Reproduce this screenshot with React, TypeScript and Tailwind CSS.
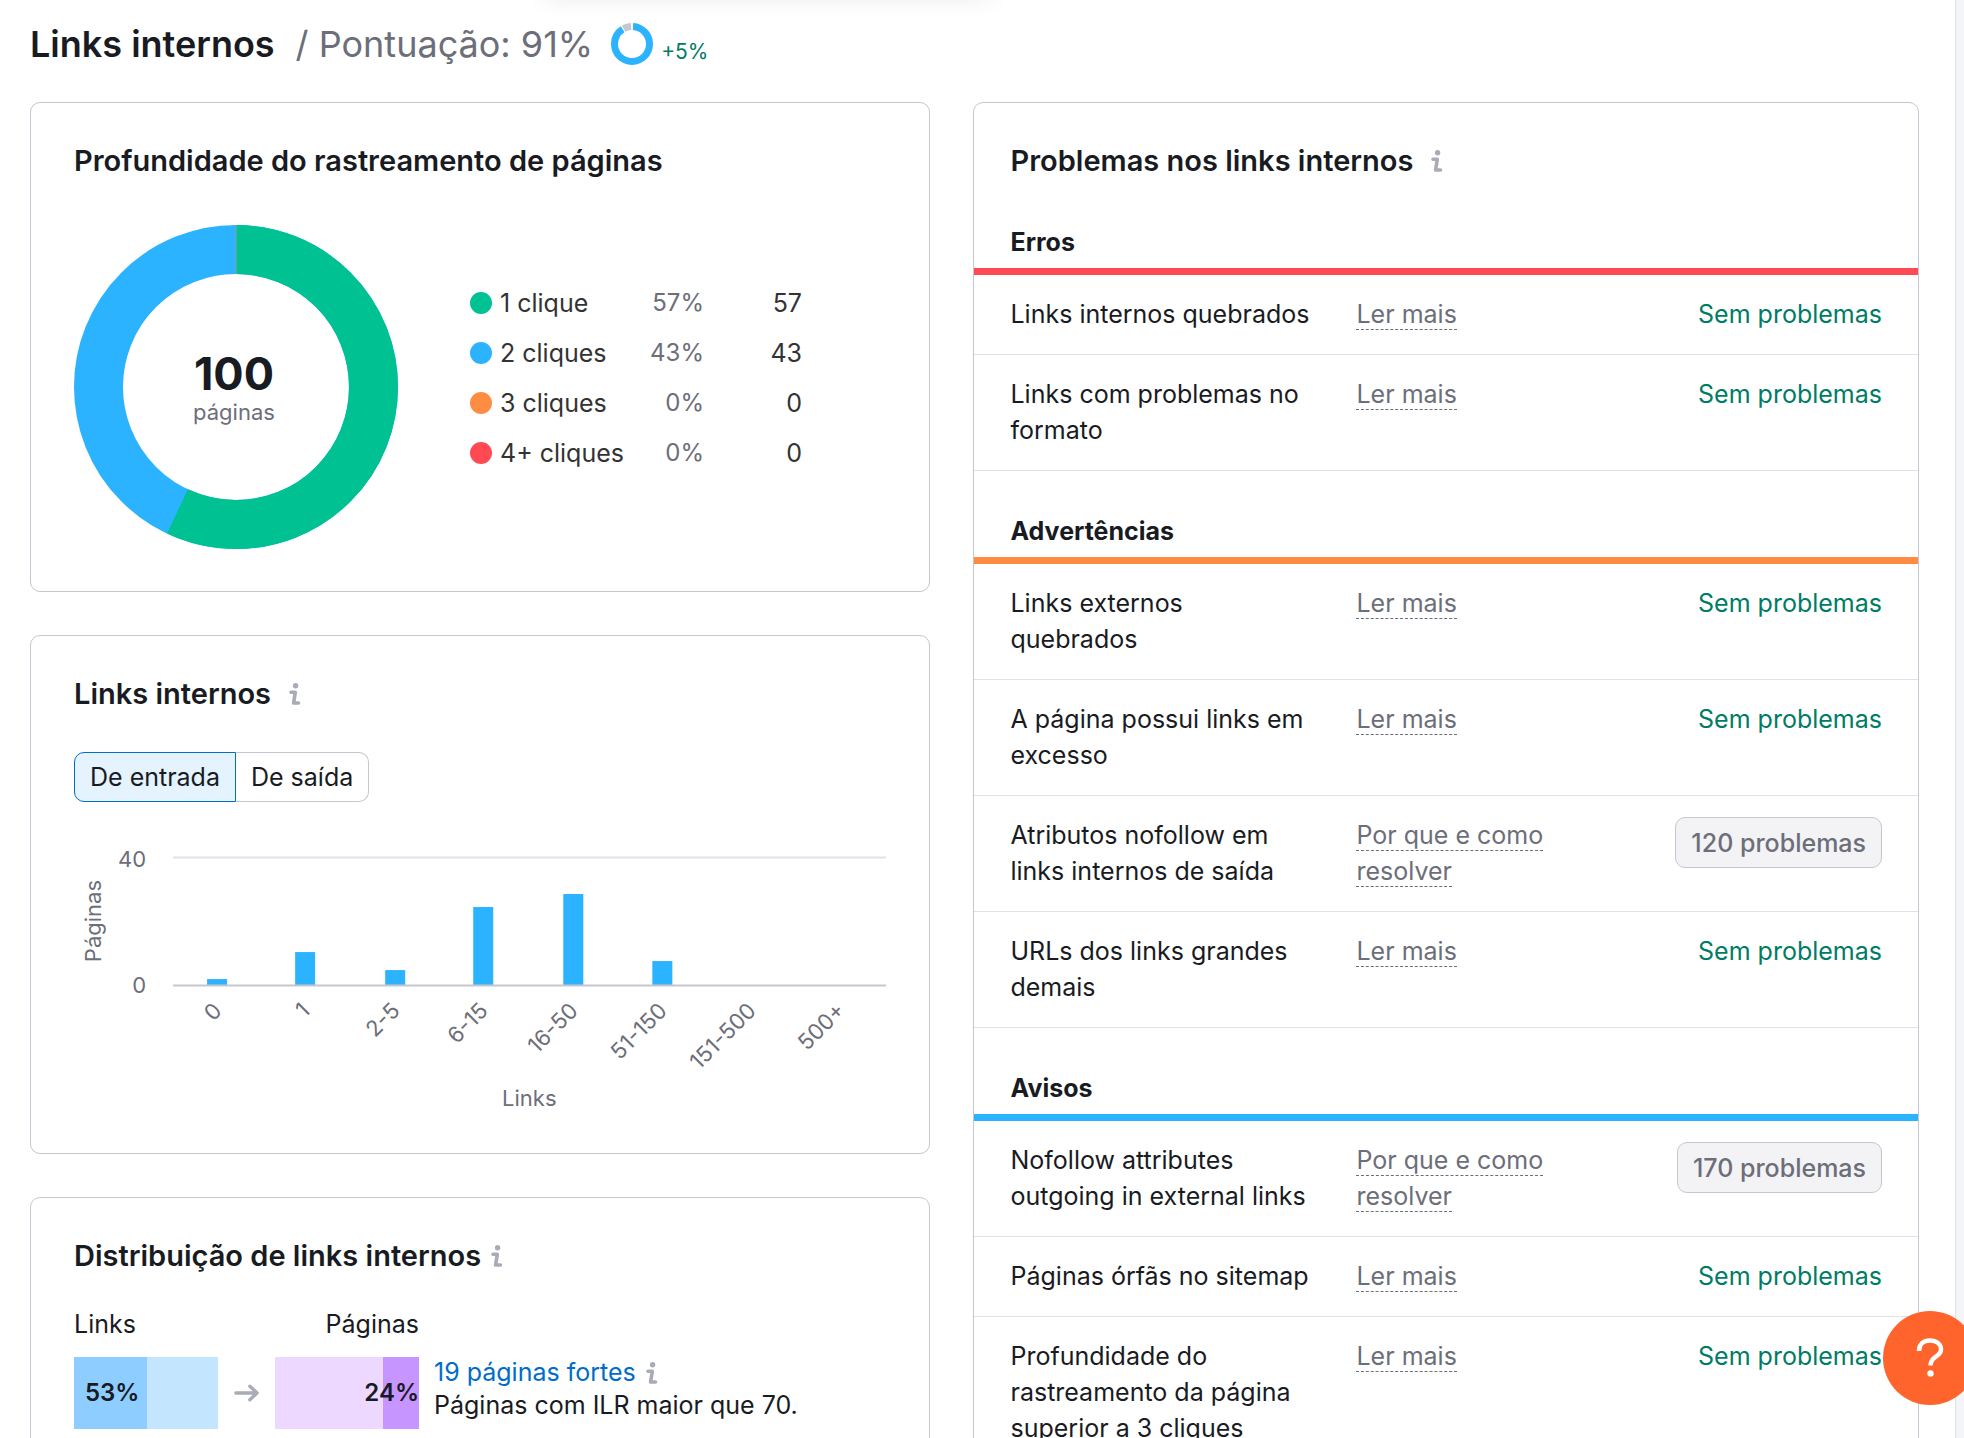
import { useState } from "react";
import clsx from "clsx";

const clicks = [
  { label: "1 clique", percent: "57%", count: 57, dot: "bg-[#00c192]" },
  { label: "2 cliques", percent: "43%", count: 43, dot: "bg-[#2bb3ff]" },
  { label: "3 cliques", percent: "0%", count: 0, dot: "bg-[#ff8c43]" },
  { label: "4+ cliques", percent: "0%", count: 0, dot: "bg-[#ff4953]" },
];

const bars = [
  { label: "0", x: 206, height: 6 },
  { label: "1", x: 294, height: 33 },
  { label: "2-5", x: 384, height: 15 },
  { label: "6-15", x: 472, height: 78 },
  { label: "16-50", x: 562, height: 91 },
  { label: "51-150", x: 651, height: 24 },
  { label: "151-500", x: 740, height: 0 },
  { label: "500+", x: 829, height: 0 },
];

const sections = [
  {
    title: "Erros",
    line: "border-[#ff4953]",
    rows: [
      { name: "Links internos quebrados", count: 0 },
      { name: "Links com problemas no formato", count: 0 },
    ],
  },
  {
    title: "Advertências",
    line: "border-[#ff8c43]",
    rows: [
      { name: "Links externos quebrados", count: 0 },
      { name: "A página possui links em excesso", count: 0 },
      { name: "Atributos nofollow em links internos de saída", count: 120 },
      { name: "URLs dos links grandes demais", count: 0 },
    ],
  },
  {
    title: "Avisos",
    line: "border-[#2bb3ff]",
    rows: [
      { name: "Nofollow attributes outgoing in external links", count: 170 },
      { name: "Páginas órfãs no sitemap", count: 0 },
      { name: "Profundidade do rastreamento da página superior a 3 cliques", count: 0 },
    ],
  },
];

const InfoIcon = () => (
  <svg viewBox="0 0 12 22" className="h-[22px] w-3 shrink-0" fill="none" aria-hidden="true">
    <circle cx="6.6" cy="2.8" r="2.7" fill="#a9abb6" />
    <path
      d="M2 9.300h4.300L4.600 20h4.900"
      stroke="#a9abb6"
      strokeWidth="3.600"
      strokeLinecap="round"
      strokeLinejoin="round"
    />
  </svg>
);

const Donut = () => (
  <div className="relative size-[324px] shrink-0">
    <svg viewBox="0 0 324 324" className="size-full" fill="none" strokeWidth="49" aria-hidden="true">
      <circle cx="162" cy="162" r="137.500" stroke="#2bb3ff" />
      <circle
        cx="162"
        cy="162"
        r="137.500"
        stroke="#00c192"
        pathLength="100"
        strokeDasharray="57 43"
        transform="rotate(-90 162 162)"
      />
      <path d="M162 0v49" stroke="#8f9aa8" strokeWidth="1" />
    </svg>
    <div className="absolute inset-0 flex flex-col items-center justify-center pt-0.5 pr-1">
      <span className="text-[45px] leading-[48px] font-bold">100</span>
      <span className="text-[22px] leading-7 text-[#6c6e79]">páginas</span>
    </div>
  </div>
);

const BarChart = () => (
  <svg
    viewBox="74 840 812 280"
    className="mt-[38px] w-full text-[22px]"
    fill="#6c6e79"
    role="img"
    aria-label="Páginas por links"
  >
    <text x="146" y="867" textAnchor="end">40</text>
    <text x="146" y="993" textAnchor="end">0</text>
    <text transform="translate(101 921) rotate(-90)" textAnchor="middle">Páginas</text>
    <path d="M173 857.500H886" stroke="#e0e1e9" strokeWidth="2" />
    {bars.map((bar) => (
      <g key={bar.label}>
        <rect x={bar.x + 1} y={985 - bar.height} width="20" height={bar.height} fill="#2bb3ff" />
        <text transform={`translate(${bar.x + 17} 1012) rotate(-45)`} textAnchor="end">
          {bar.label}
        </text>
      </g>
    ))}
    <path d="M173 985.500H886" stroke="#c4c7cf" strokeWidth="2" />
    <text x="529" y="1106" textAnchor="middle">Links</text>
  </svg>
);

const Problems = () => (
  <section className="rounded-[10px] border border-[#c4c7cf] pt-10">
    <h2 className="flex items-center gap-[18px] px-9 text-[29px] leading-9 font-semibold">
      Problemas nos links internos <InfoIcon />
    </h2>
    {sections.map((section, i) => (
      <div key={section.title}>
        <h3
          className={clsx(
            "border-b-[7px] px-9 pb-2 text-[25px] leading-9 font-bold",
            section.line,
            i === 0 ? "mt-[45px]" : "mt-[42px]"
          )}
        >
          {section.title}
        </h3>
        <table className="w-full table-fixed">
          <colgroup>
            <col className="w-[365px]" />
            <col className="w-[240px]" />
            <col />
          </colgroup>
          <tbody>
            {section.rows.map((row) => (
              <tr key={row.name} className="border-b border-[#e0e1e9] align-top">
                <td className="pt-[21px] pr-6 pb-[22px] pl-9">{row.name}</td>
                <td className="pt-[21px] pb-[22px] pl-[17px] text-[#6c6e79]">
                  <a href="#" className="border-b border-dashed border-[#6c6e79]">
                    {row.count > 0 ? "Por que e como resolver" : "Ler mais"}
                  </a>
                </td>
                <td className="pr-9 text-right">
                  {row.count > 0 ? (
                    <button className="mt-[21px] h-[51px] rounded-[10px] border border-[#c4c7cf] bg-[#f3f3f6] px-[15px] font-medium text-[#6c6e79]">
                      {row.count} problemas
                    </button>
                  ) : (
                    <div className="pt-[21px] pb-[22px] text-[#007c65]">Sem problemas</div>
                  )}
                </td>
              </tr>
            ))}
          </tbody>
        </table>
      </div>
    ))}
  </section>
);

export default function App() {
  const [incoming, setIncoming] = useState(true);

  return (
    <div className="relative flex h-screen overflow-hidden bg-white font-['Inter',sans-serif] text-[25px] leading-9 text-[#191b23]">
      {/* Shadow of the popup above the header */}
      <div className="absolute -top-11 left-[545px] h-10 w-[445px] shadow-[0_0_24px_rgba(0,0,0,0.1)]" />

      <main className="min-w-0 flex-1 pr-9 pl-[30px]">
        <header className="flex h-[102px] items-center pb-[14px]">
          <h1 className="text-4xl font-semibold">Links internos</h1>
          <span className="ml-[21px] text-4xl text-[#6c6e79]">/ Pontuação: 91%</span>
          <svg viewBox="0 0 42 42" className="ml-[18px] size-[42px]" fill="none" strokeWidth="7" aria-hidden="true">
            <circle cx="21" cy="21" r="17.500" stroke="#2bb3ff" pathLength="100" strokeDasharray="90 10" strokeDashoffset="-1" transform="rotate(-90 21 21)" />
            <circle cx="21" cy="21" r="17.500" stroke="#c4c7cf" pathLength="100" strokeDasharray="7 93" strokeDashoffset="-92" transform="rotate(-90 21 21)" />
          </svg>
          <span className="mt-4 ml-2 text-[21px] text-[#007c65]">+5%</span>
        </header>

        <div className="grid grid-cols-[900fr_945fr] items-start gap-[43px]">
          <div className="flex min-w-0 flex-col gap-[43px]">
            {/* Crawl depth */}
            <section className="rounded-[10px] border border-[#c4c7cf] px-[43px] pt-10 pb-[42px]">
              <h2 className="text-[29px] leading-9 font-semibold">Profundidade do rastreamento de páginas</h2>
              <div className="mt-[46px] flex items-center">
                <Donut />
                <table className="mb-[18px] ml-[72px] text-[#333]">
                  <tbody>
                    {clicks.map((row) => (
                      <tr key={row.label} className="h-[50px]">
                        <td className="w-[154px]">
                          <span className="flex items-center gap-2 whitespace-nowrap">
                            <i className={clsx("size-[22px] rounded-full", row.dot)} />
                            {row.label}
                          </span>
                        </td>
                        <td className="w-20 text-right text-2xl text-[#6c6e79]">{row.percent}</td>
                        <td className="w-[98px] text-right">{row.count}</td>
                      </tr>
                    ))}
                  </tbody>
                </table>
              </div>
            </section>

            {/* Internal links */}
            <section className="rounded-[10px] border border-[#c4c7cf] px-[43px] pt-10 pb-[33px]">
              <h2 className="flex items-center gap-[18px] text-[29px] leading-9 font-semibold">
                Links internos <InfoIcon />
              </h2>
              <div className="mt-10 flex h-[50px]">
                <button
                  onClick={() => setIncoming(true)}
                  className={clsx(
                    "rounded-l-[10px] border px-[15px]",
                    incoming ? "border-[#006dca] bg-[#e5f3ff]" : "border-[#c4c7cf]"
                  )}
                >
                  De entrada
                </button>
                <button
                  onClick={() => setIncoming(false)}
                  className={clsx(
                    "rounded-r-[10px] border px-[15px]",
                    incoming ? "border-l-0 border-[#c4c7cf]" : "border-[#006dca] bg-[#e5f3ff]"
                  )}
                >
                  De saída
                </button>
              </div>
              <BarChart />
            </section>

            {/* Link distribution */}
            <section className="rounded-[10px] border border-[#c4c7cf] px-[43px] pt-10 pb-10">
              <h2 className="flex items-center gap-[10px] text-[29px] leading-9 font-semibold">
                Distribuição de links internos <InfoIcon />
              </h2>
              <div className="mt-8 flex w-[345px] justify-between">
                <span>Links</span>
                <span>Páginas</span>
              </div>
              <div className="mt-[14px] flex items-center">
                <div className="flex h-[72px] w-36 items-center bg-linear-to-r from-[#8ecdff] from-[51%] to-[#c4e5fe] to-[51%] pl-[11px] text-2xl font-semibold">
                  53%
                </div>
                <svg viewBox="0 0 26 22" className="mx-4 h-[22px] w-[25px]" fill="none" stroke="#a9abb6" strokeWidth="3.500" strokeLinecap="round" strokeLinejoin="round" aria-hidden="true">
                  <path d="M2 11h21M16.500 4l7.500 7-7.500 7" />
                </svg>
                <div className="flex h-[72px] w-36 items-center justify-end bg-linear-to-r from-[#edd9ff] from-[75%] to-[#c695ff] to-[75%] text-2xl font-semibold">
                  24%
                </div>
                <div className="ml-[15px] pb-2 leading-[33px]">
                  <p className="flex items-center gap-[10px]">
                    <a href="#" className="text-[#006dca]">19 páginas fortes</a>
                    <InfoIcon />
                  </p>
                  <p>Páginas com ILR maior que 70.</p>
                </div>
              </div>
            </section>
          </div>

          <Problems />
        </div>
      </main>
      <div className="w-[9px] border-l border-[#e0e1e9] bg-[#f4f5f9]" />

      <button aria-label="Ajuda" className="fixed -right-[13px] bottom-[33px] flex size-[94px] items-center justify-center rounded-full bg-[#ff642d]">
        <svg viewBox="0 0 28 40" className="h-10 w-7" fill="none" aria-hidden="true">
          <path d="M3 13C3 6 7.500 2.500 14 2.500S25 6 25 11.500c0 8-10.500 6-10.500 16" stroke="#fff" strokeWidth="4.500" />
          <circle cx="14.500" cy="35.500" r="3.200" fill="#fff" />
        </svg>
      </button>
    </div>
  );
}
